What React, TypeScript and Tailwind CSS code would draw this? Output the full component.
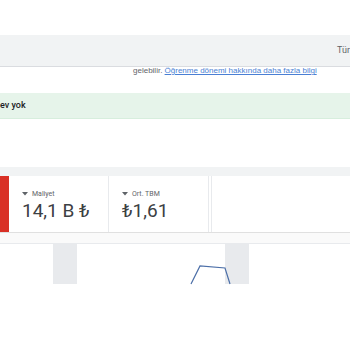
import React from 'react';

function Kpi({ label, value }: { label: string; value: string }) {
  return (
    <div className="w-[100px] shrink-0 border-r border-[#e8eaed] pl-[13px] pt-[14px]">
      <div className="flex items-center gap-[4px] text-[7px] leading-[8px] text-[#5f6368]">
        <svg width="6" height="4" viewBox="0 0 6 4"><path d="M0 0h6L3 3.5z" fill="#5f6368" /></svg>
        <span>{label}</span>
      </div>
      <div className="mt-[1px] text-[19px] leading-[24px] text-[#3c4043]">{value}</div>
    </div>
  );
}

export default function App() {
  return (
    <div className="w-[350px] h-[350px] overflow-hidden bg-white font-['Roboto',sans-serif]">
      <div className="h-[35px]" />
      {/* toolbar */}
      <div className="h-[32px] bg-[#f1f3f4] border-b border-[#dadce0] flex items-center overflow-hidden pl-[337px]">
        <span className="text-[9px] text-[#5f6368] whitespace-nowrap">Tür</span>
      </div>
      <div className="h-[26px] pl-[133px] text-[8px] leading-[8px] pt-[-1px] whitespace-nowrap font-['Liberation_Sans',sans-serif]">
        <span className="text-[#5f6368]">gelebilir. </span>
        <span className="text-[#4a7fd4] underline">Öğrenme dönemi hakkında daha fazla bilgi</span>
      </div>
      {/* green notice */}
      <div className="h-[26px] bg-[#e6f4ea] border-b border-[#d7eedd] flex items-center text-[9px] font-medium text-[#202124]">
        ev yok
      </div>
      <div className="h-[48px]" />
      {/* scorecards */}
      <div className="bg-[#f1f3f4] pt-[9px]">
        <div className="flex h-[57px] bg-white border-b border-[#e0e0e0]">
          <div className="w-[9px] shrink-0 bg-[#d93025]" />
          <Kpi label="Maliyet" value="14,1 B ₺" />
          <Kpi label="Ort. TBM" value="₺1,61" />
          <div className="w-[3px] shrink-0 border-r border-[#e8eaed]" />
          <div className="flex-1" />
        </div>
      </div>
      <div className="h-[11px] bg-[#fafafa] border-b border-[#e8eaed]" />
      {/* chart */}
      <div className="relative h-[60px]">
        <div className="flex h-[40px]">
          <div className="ml-[53px] w-[24px] bg-[#e8eaed]" />
          <div className="ml-[148px] w-[24px] bg-[#e8eaed]" />
        </div>
        <svg className="absolute left-0 top-0" width="350" height="60" viewBox="0 0 350 60">
          <polyline points="191,40 200,22 225,24 230,40" fill="none" stroke="#4c6fa8" strokeWidth="1.2" />
        </svg>
      </div>
    </div>
  );
}
